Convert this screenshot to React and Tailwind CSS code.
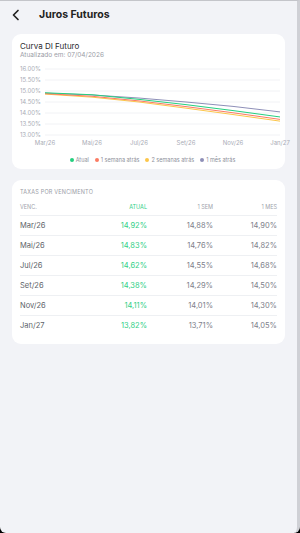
import React from 'react';

const MONTHS = ['Mar/26', 'Mai/26', 'Jul/26', 'Set/26', 'Nov/26', 'Jan/27'];

const SERIES = [
  { key: 'mes', label: '1 mês atrás', color: '#8e8fb8', values: [14.9, 14.82, 14.68, 14.5, 14.3, 14.05] },
  { key: 'duas', label: '2 semanas atrás', color: '#fcc64a', values: [14.86, 14.72, 14.5, 14.22, 13.93, 13.63] },
  { key: 'sem', label: '1 semana atrás', color: '#fb7b63', values: [14.88, 14.76, 14.55, 14.29, 14.01, 13.71] },
  { key: 'atual', label: 'Atual', color: '#25cf7f', values: [14.92, 14.83, 14.62, 14.38, 14.11, 13.82] },
];

const LEGEND = ['atual', 'sem', 'duas', 'mes'];

const ROWS = [
  ['Mar/26', '14,92%', '14,88%', '14,90%'],
  ['Mai/26', '14,83%', '14,76%', '14,82%'],
  ['Jul/26', '14,62%', '14,55%', '14,68%'],
  ['Set/26', '14,38%', '14,29%', '14,50%'],
  ['Nov/26', '14,11%', '14,01%', '14,30%'],
  ['Jan/27', '13,82%', '13,71%', '14,05%'],
];

// chart coords are relative to the card (card starts at x=12)
const X0 = 33;
const STEP = 47;
const yOf = (v) => 6 + (16 - v) * 22;

function Chart() {
  const ticks = [16, 15.5, 15, 14.5, 14, 13.5, 13];
  return (
    <svg width="276" height="86" viewBox="0 0 276 86" className="block overflow-visible">
      {ticks.map((t) => (
        <g key={t}>
          <line x1={X0} x2={268} y1={yOf(t)} y2={yOf(t)} stroke="#f1f2f5" strokeWidth="1" />
          <text x={29} y={yOf(t) + 2} textAnchor="end" fontSize="6" fill="#a9acb6">
            {t.toFixed(2)}%
          </text>
        </g>
      ))}
      {SERIES.map((s) => (
        <polyline
          key={s.key}
          fill="none"
          stroke={s.color}
          strokeWidth="1"
          points={s.values.map((v, i) => `${X0 + i * STEP},${yOf(v)}`).join(' ')}
        />
      ))}
      {MONTHS.map((m, i) => (
        <text key={m} x={X0 + i * STEP} y={82} textAnchor="middle" fontSize="6" fill="#a9acb6">
          {m}
        </text>
      ))}
    </svg>
  );
}

export default function App() {
  return (
    <div className="w-[300px] h-[533px] bg-black" style={{ fontFamily: 'Inter, "Noto Sans", sans-serif' }}>
      <div className="h-full rounded-b-[6px] bg-[#f2f3f7] border-t border-t-[#c4c5ca] border-r-[3px] border-r-[#cfd0d5]">
        {/* Header */}
        <div className="h-[30px] flex items-center pl-[11px]">
          <svg width="10" height="12" viewBox="0 0 10 12" className="mt-[-2px]">
            <path d="M7 1.5 L2.5 6 L7 10.5" fill="none" stroke="#222" strokeWidth="1.7" strokeLinecap="round" strokeLinejoin="round" />
          </svg>
          <span className="ml-[18px] mt-[-2px] text-[10.5px] font-bold text-[#222]">Juros Futuros</span>
        </div>

        {/* Chart card */}
        <div className="mx-[12px] mt-[3px] h-[135px] bg-white rounded-[9px]">
          <div className="pl-[8px] pt-[7px]">
            <div className="text-[8px] leading-[10px] text-[#2a2a2e]">Curva DI Futuro</div>
            <div className="text-[6.5px] leading-[9px] text-[#9a9da6]">Atualizado em: 07/04/2026</div>
          </div>
          <div className="mt-[3px]">
            <Chart />
          </div>
          <div className="flex justify-center items-center gap-[6px] mt-[7px] pl-[8px]">
            {LEGEND.map((k) => {
              const s = SERIES.find((x) => x.key === k);
              return (
                <div key={k} className="flex items-center gap-[2px]">
                  <span className="w-[4px] h-[4px] rounded-full" style={{ backgroundColor: s.color }} />
                  <span className="text-[5.5px] text-[#8d909a]">{s.label}</span>
                </div>
              );
            })}
          </div>
        </div>

        {/* Table card */}
        <div className="mx-[12px] mt-[11px] bg-white rounded-[9px] px-[8px] pt-[8px] pb-[8px]">
          <div className="text-[5.5px] leading-[8px] tracking-[0.2px] text-[#9a9da6]">TAXAS POR VENCIMENTO</div>
          <div className="grid grid-cols-[1fr_64px_66px_64px] h-[17px] items-center mt-[3px] text-[5.5px] text-[#a0a3ac] border-b border-[#eef0f3]">
            <span>VENC.</span>
            <span className="text-right text-[#2fcf86]">ATUAL</span>
            <span className="text-right">1 SEM</span>
            <span className="text-right">1 MES</span>
          </div>
          {ROWS.map((r, i) => (
            <div
              key={r[0]}
              className={`grid grid-cols-[1fr_64px_66px_64px] h-[20px] items-center text-[7.5px] ${
                i < ROWS.length - 1 ? 'border-b border-[#eef0f3]' : ''
              }`}
            >
              <span className="text-[#5c5f68]">{r[0]}</span>
              <span className="text-right text-[#2fcf86]">{r[1]}</span>
              <span className="text-right text-[#7d808a]">{r[2]}</span>
              <span className="text-right text-[#7d808a]">{r[3]}</span>
            </div>
          ))}
        </div>
      </div>
    </div>
  );
}
